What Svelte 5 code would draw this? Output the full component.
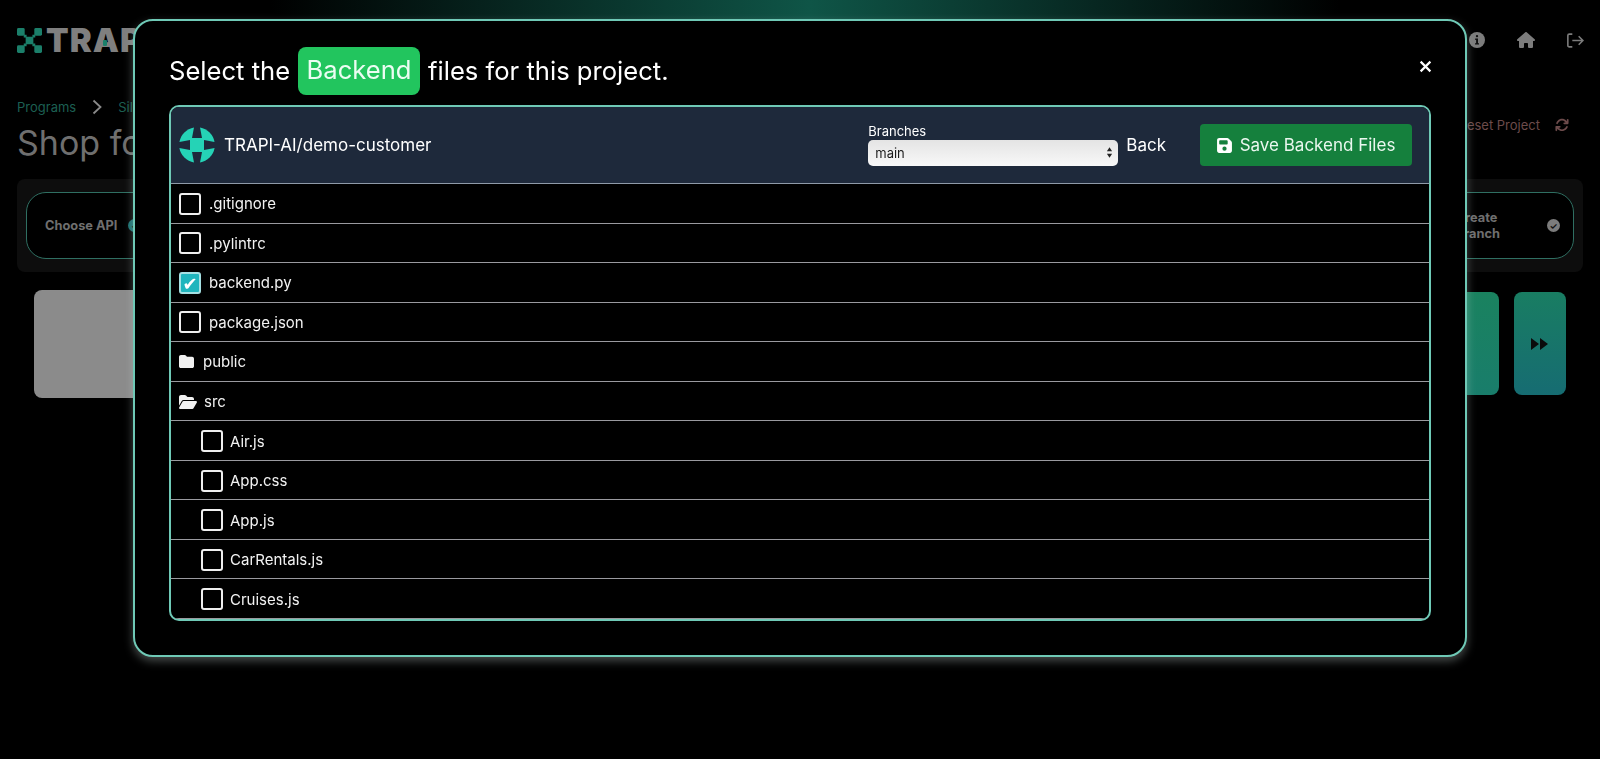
<script>
  const rootItems = [
    { name: '.gitignore' },
    { name: '.pylintrc' },
    { name: 'backend.py', checked: true },
    { name: 'package.json' }
  ];
  const srcItems = ['Air.js', 'App.css', 'App.js', 'CarRentals.js', 'Cruises.js'];
</script>

<div class="page">
  <header class="topbar">
    <div class="brand">
      <svg class="brand-mark" viewBox="0 0 26 26" aria-hidden="true">
        <rect x="0" y="0" width="8" height="8" rx="1.5" />
        <rect x="18" y="0" width="8" height="8" rx="1.5" />
        <rect x="0" y="18" width="8" height="8" rx="1.5" />
        <rect x="18" y="18" width="8" height="8" rx="1.5" />
        <rect x="9" y="9" width="8" height="8" rx="1" />
        <path d="M7 7h3v3H7zM16 7h3v3h-3zM7 16h3v3H7zM16 16h3v3h-3z" />
      </svg>
      <span class="brand-name">TR<span class="brand-a">A</span>PI</span>
    </div>
    <nav class="top-icons">
      <svg class="ic-info" viewBox="0 0 16 16" aria-hidden="true">
        <circle cx="8" cy="8" r="8" fill="#7c7c7c" />
        <rect x="6.9" y="3" width="2.2" height="2.2" rx="1" fill="#111" />
        <path d="M6.2 6.6h2.8v4.6h1v1.4H6v-1.4h1.1V8H6.2z" fill="#111" />
      </svg>
      <svg class="ic-home" viewBox="0 0 576 512" aria-hidden="true">
        <path fill="#7c7c7c" d="M575.8 255.5c0 18-15 32.1-32 32.1h-32l.7 160.2c0 2.7-.2 5.4-.5 8.1V472c0 22.1-17.9 40-40 40H456c-1.1 0-2.2 0-3.3-.1c-1.4 .1-2.8 .1-4.2 .1H416 392c-22.1 0-40-17.9-40-40V448 384c0-17.7-14.3-32-32-32H256c-17.7 0-32 14.3-32 32v64 24c0 22.1-17.9 40-40 40H160 128.1c-1.5 0-3-.1-4.5-.2c-1.2 .1-2.4 .2-3.6 .2H104c-22.1 0-40-17.9-40-40V360c0-.9 0-1.9 .1-2.8V287.6H32c-18 0-32-14-32-32.1c0-9 3-17 10-24L266.4 8c7-7 15-8 22-8s15 2 21 7L564.8 231.5c8 7 12 15 11 24z" />
      </svg>
      <svg class="ic-out" viewBox="0 0 16 14" aria-hidden="true" fill="none" stroke="#7c7c7c" stroke-width="1.5">
        <path d="M5 1H2.2a1.4 1.4 0 0 0-1.4 1.4v9.2A1.4 1.4 0 0 0 2.2 13H5" />
        <path d="M5 7h10M11 3l4 4-4 4" />
      </svg>
    </nav>
  </header>

  <div class="crumbs">
    <span>Programs</span>
    <svg viewBox="0 0 10 16" aria-hidden="true" fill="none" stroke="#8a8a8a" stroke-width="1.8"><path d="M1.5 1.5 8.5 8l-7 6.5" /></svg>
    <span>Silver</span>
  </div>

  <div class="title-row">
    <h1>Shop for flights</h1>
    <div class="reset">
      <span>Reset Project</span>
      <svg viewBox="0 0 512 512" aria-hidden="true">
        <path fill="#6d4b4b" d="M105.1 202.6c7.7-21.8 20.2-42.3 37.8-59.8c62.5-62.5 163.8-62.5 226.3 0L386.3 160H336c-17.7 0-32 14.3-32 32s14.3 32 32 32H463.5c0 0 0 0 0 0h.4c17.7 0 32-14.3 32-32V64c0-17.7-14.3-32-32-32s-32 14.3-32 32v51.2L414.4 97.6c-87.5-87.5-229.3-87.5-316.8 0C73.2 122 55.6 150.7 44.8 181.4c-5.9 16.7 2.9 34.9 19.5 40.8s34.9-2.9 40.8-19.5zM39 289.3c-5 1.5-9.8 4.2-13.7 8.2c-4 4-6.7 8.8-8.1 14c-.3 1.2-.6 2.5-.8 3.8c-.3 1.7-.4 3.4-.4 5.1V448c0 17.7 14.3 32 32 32s32-14.3 32-32V396.9l17.6 17.5 0 0c87.5 87.4 229.3 87.4 316.7 0c24.4-24.4 42.1-53.1 52.9-83.7c5.9-16.7-2.9-34.9-19.5-40.8s-34.9 2.9-40.8 19.5c-7.7 21.8-20.2 42.3-37.8 59.8c-62.5 62.5-163.8 62.5-226.3 0l-.1-.1L125.6 352H176c17.7 0 32-14.3 32-32s-14.3-32-32-32H48.4c-1.6 0-3.2 .1-4.8 .3s-3.1 .5-4.6 1z" />
      </svg>
    </div>
  </div>

  <section class="stepper">
    <div class="pill">
      <div class="step">
        <span class="step-name">Choose API</span>
        <span class="dot dot-teal">✓</span>
      </div>
      <div class="step">
        <span class="step-name">Create<br />Branch</span>
        <span class="dot dot-gray">✓</span>
      </div>
    </div>
  </section>

  <section class="cards">
    <div class="card-gray"></div>
    <div class="card-green"></div>
    <div class="card-next">
      <svg viewBox="0 0 20 14" aria-hidden="true"><path fill="#0b0b0b" d="M1 1v12l8-6zM10 1v12l8-6z" /></svg>
    </div>
  </section>
</div>

<div class="overlay">
  <div class="modal" role="dialog">
    <button class="close" aria-label="Close">
      <svg viewBox="0 0 12 12" aria-hidden="true" fill="none" stroke="#fff" stroke-width="2"><path d="M1.5 1.5l9 9M10.5 1.5l-9 9" /></svg>
    </button>
    <h2><span>Select the</span><span class="badge">Backend</span><span>files for this project.</span></h2>

    <div class="browser">
      <div class="browser-head">
        <svg class="repo-logo" viewBox="0 0 36 36" aria-hidden="true">
          <g fill="#25d3b6">
            <rect x="11" y="11" width="14" height="14" />
            <path d="M15 .4A18 18 0 0 0 .4 15L11 13 13 11z" />
            <path d="M21 .4A18 18 0 0 1 35.6 15L25 13 23 11z" />
            <path d="M15 35.6A18 18 0 0 1 .4 21L11 23 13 25z" />
            <path d="M21 35.6A18 18 0 0 0 35.6 21L25 23 23 25z" />
          </g>
        </svg>
        <span class="repo-name">TRAPI-AI/demo-customer</span>
        <label class="branches">
          <span>Branches</span>
          <span class="select-wrap">
            <select>
              <option>main</option>
            </select>
            <svg viewBox="0 0 8 14" aria-hidden="true"><path fill="#222" d="M4 1 7 5.5H1zM4 13 1 8.5h6z" /></svg>
          </span>
        </label>
        <button class="back">Back</button>
        <button class="save">
          <svg viewBox="0 0 448 512" aria-hidden="true">
            <path fill="#fff" d="M64 32C28.7 32 0 60.7 0 96V416c0 35.3 28.7 64 64 64H384c35.3 0 64-28.7 64-64V173.3c0-17-6.7-33.3-18.7-45.3L352 50.7C340 38.7 323.7 32 306.7 32H64zm0 96c0-17.7 14.3-32 32-32H288c17.7 0 32 14.3 32 32v64c0 17.7-14.3 32-32 32H96c-17.7 0-32-14.3-32-32V128zM224 288a64 64 0 1 1 0 128 64 64 0 1 1 0-128z" />
          </svg>
          Save Backend Files
        </button>
      </div>

      <ul class="files">
        {#each rootItems as item}
          <li>
            <input type="checkbox" checked={item.checked} />
            <span>{item.name}</span>
          </li>
        {/each}
        <li class="folder">
          <svg class="ic-folder" viewBox="0 0 512 512" aria-hidden="true">
            <path fill="#f1f1f1" d="M64 480H448c35.3 0 64-28.7 64-64V160c0-35.3-28.7-64-64-64H288c-10.1 0-19.6-4.7-25.6-12.8L243.2 58.7C231.1 42.6 212.1 32 192 32H64C28.7 32 0 60.7 0 96V416c0 35.3 28.7 64 64 64z" />
          </svg>
          <span>public</span>
        </li>
        <li class="folder folder-open">
          <svg class="ic-folder-open" viewBox="0 0 576 512" aria-hidden="true">
            <path fill="#f1f1f1" d="M88.7 223.8L0 375.8V96C0 60.7 28.7 32 64 32H181.5c17 0 33.3 6.7 45.3 18.7l26.5 26.5c12 12 28.3 18.7 45.3 18.7H416c35.3 0 64 28.7 64 64v32H144c-22.8 0-43.8 12.1-55.3 31.8zm27.6 16.1C122.1 230 132.6 224 144 224H544c11.5 0 22 6.1 27.7 16.1s5.7 22.2-.1 32.1l-112 192C453.9 474 443.4 480 432 480H32c-11.5 0-22-6.1-27.7-16.1s-5.7-22.2 .1-32.1l112-192z" />
          </svg>
          <span>src</span>
        </li>
        {#each srcItems as name}
          <li class="nested">
            <input type="checkbox" />
            <span>{name}</span>
          </li>
        {/each}
      </ul>
    </div>
  </div>
</div>

<style>
  :global(body) {
    margin: 0;
    background: #000;
    font-family: Inter, "Liberation Sans", sans-serif;
    overflow: hidden;
  }

  .page {
    height: 759px;
    box-sizing: border-box;
    padding: 0 17px;
    overflow: hidden;
    color: #7c7c7c;
    background: linear-gradient(90deg, #000 270px, #06211c 480px, #0f5547 810px, #06211c 1130px, #000 1340px) no-repeat 0 0 / 100% 24px;
  }

  .topbar {
    display: flex;
    justify-content: space-between;
    align-items: center;
    height: 80px;
  }

  .brand {
    display: flex;
    align-items: center;
    gap: 4px;
  }

  .brand-mark {
    width: 25px;
    height: 25px;
    fill: #1b7f6a;
  }

  .brand-name {
    font-size: 33px;
    font-weight: 900;
    line-height: 1;
    letter-spacing: 1px;
    color: #7f7f7f;
  }

  .brand-a {
    position: relative;
  }

  .brand-a::after {
    content: "";
    position: absolute;
    left: 10px;
    top: 20px;
    width: 4px;
    height: 6px;
    border-radius: 1px;
    background: #1b7f6a;
  }

  .top-icons {
    display: flex;
    align-items: center;
    gap: 32px;
    margin-right: -1px;
  }

  .ic-info { width: 16px; height: 16px; }
  .ic-home { width: 18px; height: 16px; }
  .ic-out { width: 17px; height: 15px; }

  .crumbs {
    display: flex;
    align-items: center;
    gap: 16px;
    height: 20px;
    margin-top: 17px;
    font-size: 13px;
    color: #1c5f52;
  }

  .crumbs svg { width: 10px; height: 16px; }

  .title-row {
    display: flex;
    justify-content: space-between;
    align-items: center;
    height: 50px;
  }

  h1 {
    margin: 0;
    font-size: 34px;
    font-weight: 400;
    color: #6f6f6f;
  }

  .reset {
    display: flex;
    align-items: center;
    gap: 15px;
    margin: -34px 14px 0 0;
    font-size: 13px;
    color: #6d4b4b;
  }

  .reset svg { width: 14px; height: 14px; }

  .stepper {
    height: 93px;
    margin-top: 12px;
    padding: 13px 9px;
    box-sizing: border-box;
    border-radius: 8px;
    background: #0d0d0d;
  }

  .pill {
    display: flex;
    justify-content: space-between;
    align-items: center;
    height: 67px;
    box-sizing: border-box;
    padding: 0 13px 0 18px;
    border: 1px solid #2f6f62;
    border-radius: 20px;
    background: #000;
  }

  .step {
    display: flex;
    align-items: center;
    gap: 11px;
  }

  .step + .step { gap: 47px; }

  .step-name {
    font-size: 12.8px;
    font-weight: 700;
    line-height: 16px;
    color: #6f6f6f;
  }

  .dot {
    display: inline-flex;
    justify-content: center;
    align-items: center;
    width: 13px;
    height: 13px;
    border-radius: 50%;
    font-size: 9px;
    font-weight: 700;
    color: #111;
  }

  .dot-teal { background: #1a6f70; }
  .dot-gray { background: #7c7c7c; }

  .cards {
    display: flex;
    align-items: flex-start;
    gap: 15px;
    margin-top: 18px;
    padding: 0 17px;
  }

  .card-gray {
    flex: 1;
    height: 108px;
    border-radius: 8px;
    background: #8b8b8b;
  }

  .card-green {
    width: 100px;
    height: 103px;
    margin-top: 2px;
    border-radius: 8px;
    background: linear-gradient(180deg, #1a825f, #197d6b);
  }

  .card-next {
    display: flex;
    justify-content: center;
    align-items: center;
    width: 52px;
    height: 103px;
    margin-top: 2px;
    border-radius: 8px;
    background: linear-gradient(180deg, #197d62, #166c72);
  }

  .card-next svg { width: 20px; height: 14px; }

  .overlay {
    position: fixed;
    inset: 0;
    display: flex;
    justify-content: center;
    align-items: flex-start;
    padding-top: 19px;
  }

  .modal {
    position: relative;
    width: 1334px;
    height: 638px;
    box-sizing: border-box;
    padding: 26px 34px 0;
    border: 2px solid #6fc9b6;
    border-radius: 20px;
    background: #000;
    box-shadow: 0 4px 10px rgba(200, 215, 212, 0.35);
  }

  h2 {
    display: flex;
    align-items: center;
    gap: 8px;
    height: 48px;
    margin: 0 0 10px;
    font-size: 25.6px;
    font-weight: 400;
    color: #fff;
    white-space: nowrap;
  }

  h2 span {
    padding-bottom: 2px;
  }

  h2 .badge {
    padding: 0 8.5px 2px;
    line-height: 46px;
    border-radius: 8px;
    background: #22c55e;
    color: #ecfdf3;
  }

  .close {
    position: absolute;
    top: 39px;
    right: 33px;
    display: flex;
    padding: 0;
    border: 0;
    background: none;
  }

  .close svg { width: 13px; height: 13px; }

  .browser {
    height: 516px;
    box-sizing: border-box;
    border: 2px solid #6fc9b6;
    border-radius: 10px;
    overflow: hidden;
  }

  .browser-head {
    display: flex;
    align-items: center;
    height: 77px;
    box-sizing: border-box;
    padding: 0 17px 0 8px;
    background: #1e293b;
    border-bottom: 1px solid #8f9aa8;
    color: #fff;
  }

  .repo-logo {
    width: 36px;
    height: 36px;
    margin-right: 9px;
  }

  .repo-name {
    flex: 1;
    font-size: 17px;
  }

  .branches {
    display: flex;
    flex-direction: column;
    gap: 1px;
    width: 250px;
    font-size: 13px;
    line-height: 15px;
  }

  .select-wrap {
    position: relative;
    display: block;
  }

  .select-wrap svg {
    position: absolute;
    top: 6px;
    right: 5px;
    width: 7px;
    height: 13px;
  }

  select {
    appearance: none;
    width: 100%;
    height: 26px;
    padding: 0 7px;
    border: 0;
    border-radius: 5px;
    background: linear-gradient(180deg, #e4e4e4, #f8f8f8);
    font-family: inherit;
    font-size: 13px;
    color: #1a1a1a;
  }

  .back {
    margin: 0 34px 0 8px;
    padding: 0;
    border: 0;
    background: none;
    font: inherit;
    font-size: 17px;
    color: #fff;
  }

  .save {
    display: flex;
    align-items: center;
    gap: 8px;
    width: 212px;
    height: 42px;
    justify-content: center;
    padding: 0;
    border: 0;
    border-radius: 4px;
    background: #15803d;
    font: inherit;
    font-size: 17px;
    color: #eaf7ef;
  }

  .save svg { width: 15px; height: 17px; }

  .files {
    margin: 0;
    padding: 0;
    list-style: none;
    color: #f2f2f2;
    font-size: 15px;
  }

  .files li {
    display: flex;
    align-items: center;
    gap: 8px;
    height: 39.55px;
    box-sizing: border-box;
    padding: 1px 0 0 8px;
    border-bottom: 1px solid #9a9a9f;
  }

  .files li.nested {
    gap: 7px;
    padding-left: 30px;
  }

  input[type="checkbox"] {
    appearance: none;
    display: flex;
    justify-content: center;
    align-items: center;
    flex: none;
    width: 22px;
    height: 22px;
    margin: 0;
    border: 2px solid #efefef;
    border-radius: 3px;
    background: #000;
  }

  input[type="checkbox"]:checked {
    background: #1fb5bd;
    border-color: #a5e0e3;
  }

  input[type="checkbox"]:checked::after {
    content: "✔";
    margin-top: 2px;
    font-family: "DejaVu Sans", sans-serif;
    font-size: 18px;
    line-height: 1;
    color: #fff;
  }

  .ic-folder { width: 15px; height: 15px; }
  .ic-folder-open { width: 18px; height: 16px; }
  li.folder { gap: 9px; }
  li.folder-open { gap: 7px; }
</style>
